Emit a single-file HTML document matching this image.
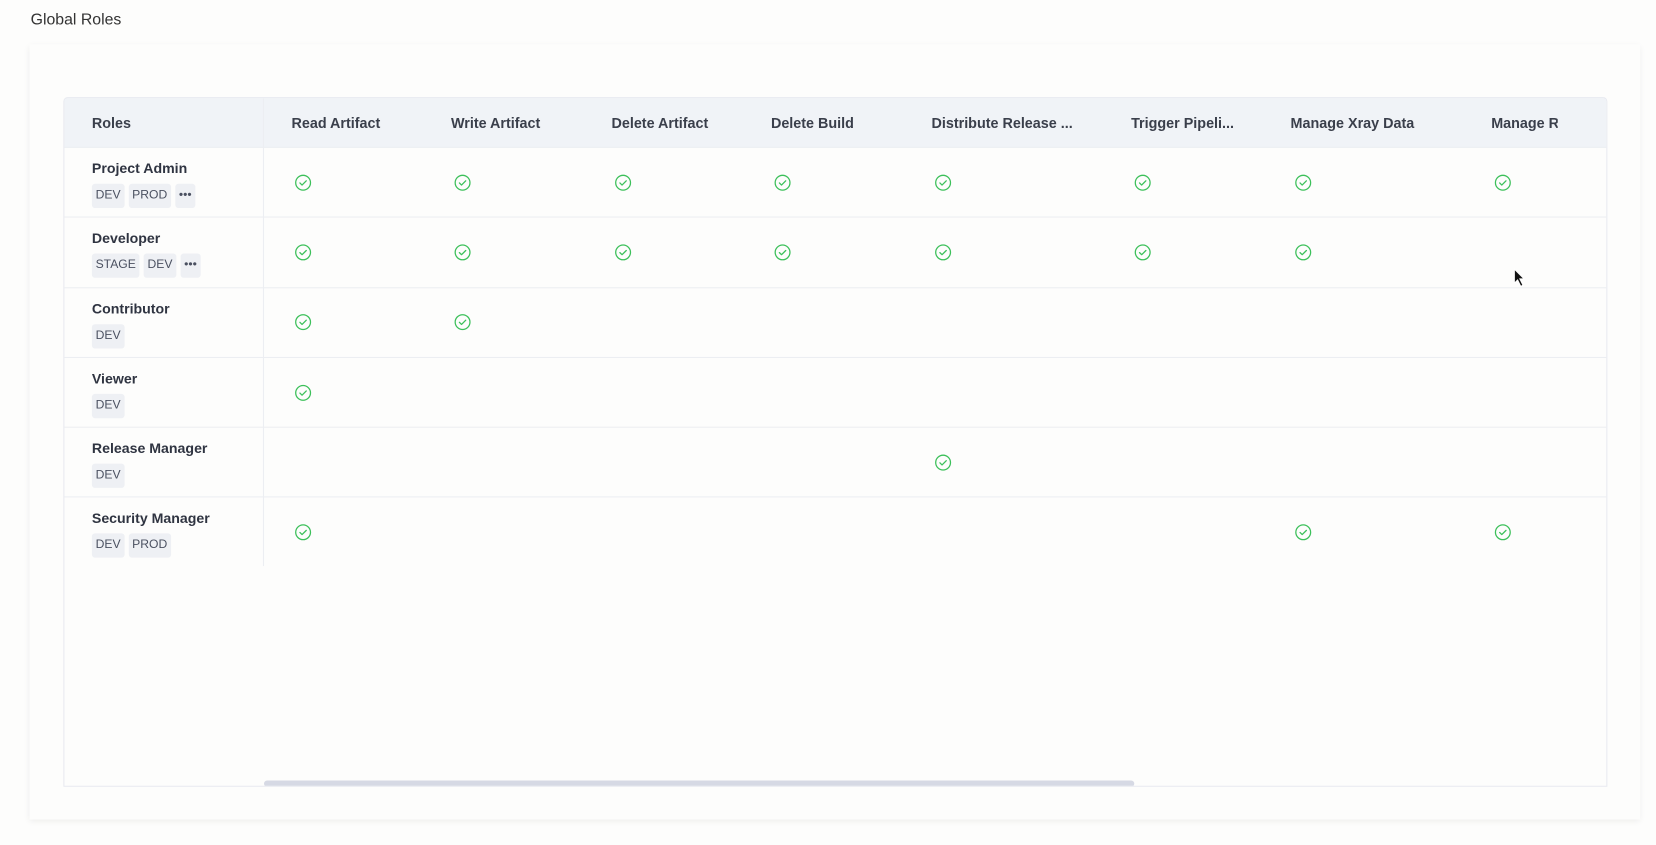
<!DOCTYPE html>
<html><head><meta charset="utf-8"><style>
*{margin:0;padding:0;box-sizing:border-box}
body{width:1656px;height:844px;background:#fdfdfc;font-family:"Liberation Sans",sans-serif;overflow:hidden;color:#2f3441}
#w{position:absolute;left:0;top:0;width:1568px;height:800px;transform:scale(1.0561);transform-origin:0 0}
.title{position:absolute;left:29px;top:10px;font-size:15px;color:#333}
.card{position:absolute;left:28px;top:42px;width:1525px;height:734px;background:#fdfdfc;box-shadow:0 2px 6px rgba(0,0,0,0.07)}
.tbl{position:absolute;left:60px;top:92px;width:1462px;height:653px;border:1px solid #e8eaf0;border-radius:4px 4px 0 0;background:#fdfdfc;overflow:hidden}
.hdr{position:absolute;left:0;top:0;width:100%;height:47px;background:#f0f3f7}
.h{position:absolute;top:16px;font-size:13.6px;font-weight:bold;color:#3a3f4b;white-space:nowrap}
.row{position:absolute;left:0;width:100%;height:66px;border-top:1px solid #eceef2}
.name{position:absolute;left:26px;top:12px;font-size:13.4px;font-weight:bold;color:#2f3441}
.tags{position:absolute;left:26px;top:34px;display:flex;gap:4px}
.tag{height:23px;padding:0 3.5px;background:#eef0f4;border-radius:3px;font-size:11.5px;color:#4a5060;line-height:23px}
.vl{position:absolute;left:188px;top:0;width:1px;height:443px;background:#eceef2}
.sb{position:absolute;left:189px;top:646px;width:824px;height:6px;background:#d6d9e4;border-radius:3px}
</style></head><body>
<div id="w">
<div class="title">Global Roles</div>
<div class="card"></div>
<div class="tbl">
<div class="hdr">
<div class="h" style="left:26px">Roles</div>
<div class="h" style="left:215px">Read Artifact</div>
<div class="h" style="left:366px">Write Artifact</div>
<div class="h" style="left:518px">Delete Artifact</div>
<div class="h" style="left:669px">Delete Build</div>
<div class="h" style="left:821px">Distribute Release ...</div>
<div class="h" style="left:1010px">Trigger Pipeli...</div>
<div class="h" style="left:1161px">Manage Xray Data</div>
<div class="h" style="left:1351px;width:63px;overflow:hidden">Manage Reports</div>
</div>
<div class="vl"></div>
<div class="row" style="top:46px"><div class="name">Project Admin</div><div class="tags"><span class="tag">DEV</span><span class="tag">PROD</span><span class="tag">•••</span></div></div>
<div class="row" style="top:112px"><div class="name">Developer</div><div class="tags"><span class="tag">STAGE</span><span class="tag">DEV</span><span class="tag">•••</span></div></div>
<div class="row" style="top:179px"><div class="name">Contributor</div><div class="tags"><span class="tag">DEV</span></div></div>
<div class="row" style="top:245px"><div class="name">Viewer</div><div class="tags"><span class="tag">DEV</span></div></div>
<div class="row" style="top:311px"><div class="name">Release Manager</div><div class="tags"><span class="tag">DEV</span></div></div>
<div class="row" style="top:377px"><div class="name">Security Manager</div><div class="tags"><span class="tag">DEV</span><span class="tag">PROD</span></div></div>
<div class="sb"></div>
</div>
<svg width="1568" height="800" style="position:absolute;left:0;top:0" fill="none" stroke="#3cc05a" stroke-width="1.2">
<defs><g id="c"><circle cx="0" cy="0" r="7"/><path d="M-3 0.2 L-1 2.2 L3 -1.8" stroke-linecap="round" stroke-linejoin="round"/></g></defs>
<use href="#c" x="287" y="173"/><use href="#c" x="438" y="173"/><use href="#c" x="590" y="173"/><use href="#c" x="741" y="173"/><use href="#c" x="893" y="173"/><use href="#c" x="1082" y="173"/><use href="#c" x="1234" y="173"/><use href="#c" x="1423" y="173"/>
<use href="#c" x="287" y="239"/><use href="#c" x="438" y="239"/><use href="#c" x="590" y="239"/><use href="#c" x="741" y="239"/><use href="#c" x="893" y="239"/><use href="#c" x="1082" y="239"/><use href="#c" x="1234" y="239"/>
<use href="#c" x="287" y="305"/><use href="#c" x="438" y="305"/>
<use href="#c" x="287" y="372"/>
<use href="#c" x="893" y="438"/>
<use href="#c" x="287" y="504"/><use href="#c" x="1234" y="504"/><use href="#c" x="1423" y="504"/>
<path d="M1434 255 L1434 268 L1437 265 L1440 271 L1442 270 L1439 264 L1443 264 Z" fill="#111" stroke="#fff" stroke-width="0.8"/>
</svg>
</div>
</body></html>
